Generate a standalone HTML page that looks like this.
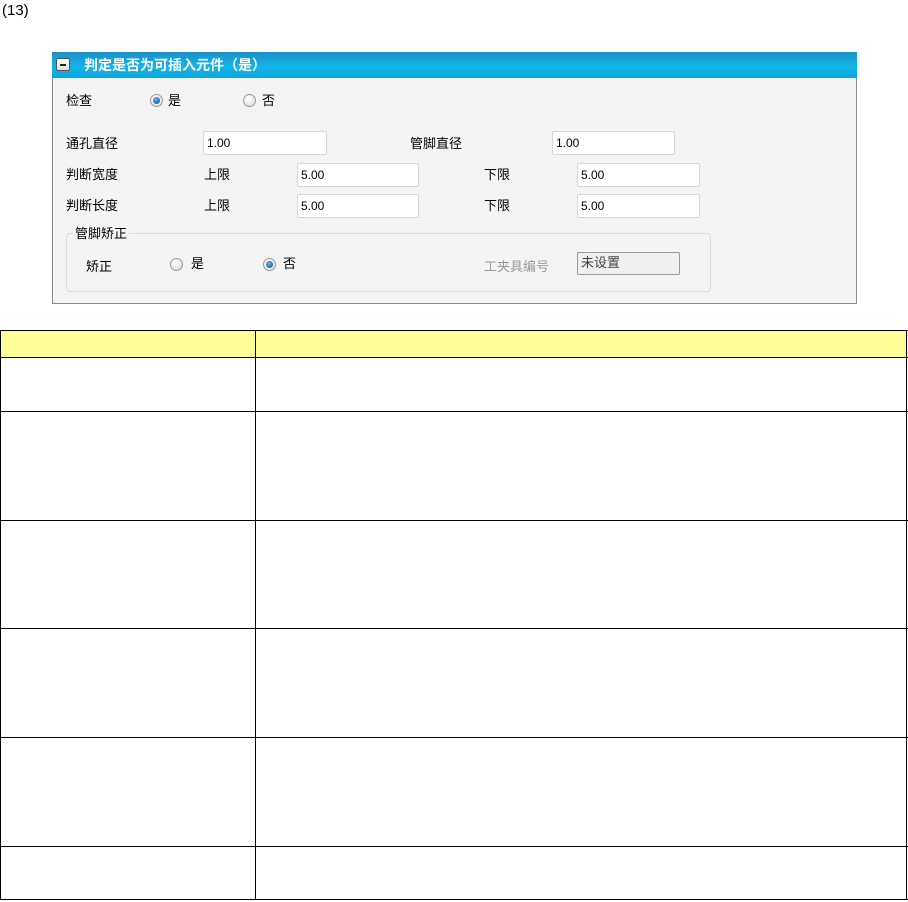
<!DOCTYPE html>
<html><head><meta charset="utf-8"><style>
body{margin:0;width:908px;height:902px;background:#fff;position:relative;font-family:"Liberation Sans","Noto Sans CJK SC",sans-serif;overflow:hidden}
.a{position:absolute}
.t{position:absolute;font-size:13px;color:#000;line-height:16px;white-space:nowrap}
.in{position:absolute;background:#fff;border:1px solid #d6d6d6;border-radius:2px;box-sizing:border-box;font-size:12px;line-height:22px;padding-left:3px;font-family:"Liberation Sans Narrow","Liberation Sans",sans-serif}
.r{position:absolute;width:11px;height:11px;border-radius:50%;border:1px solid #9a9a9a;background:radial-gradient(circle at 40% 35%,#fff,#d8d8d8)}
.r.on::after{content:"";position:absolute;left:2px;top:2px;width:7px;height:7px;border-radius:50%;background:radial-gradient(circle at 40% 35%,#6ab0e8,#0a4f8f)}
.hl{position:absolute;left:0;width:908px;height:1px;background:#000}
</style></head><body>
<div class="t" style="left:2px;top:2px;font-size:15px;line-height:18px">(13)</div>

<div class="a" style="left:52px;top:52px;width:805px;height:252px;border:1px solid #8a8a8a;box-sizing:border-box;background:#f4f4f4"></div>
<div class="a" style="left:52px;top:52px;width:805px;height:26px;background:linear-gradient(#1a90c8,#12b6e8 60%,#0ea6dc);border-bottom:1px solid #6a8a9a;box-sizing:border-box"></div>
<div class="a" style="left:56px;top:58px;width:14px;height:13px;background:linear-gradient(#fff,#ddd);border:1px solid #555;border-radius:2px;box-sizing:border-box"><div class="a" style="left:3px;top:5px;width:6px;height:2px;background:#222"></div></div>
<div class="t" style="left:84px;top:57px;color:#fff;font-weight:bold;font-size:14px">判定是否为可插入元件（是）</div>

<div class="t" style="left:66px;top:93px">检查</div>
<div class="r on" style="left:150px;top:94px"></div><div class="t" style="left:168px;top:93px">是</div>
<div class="r" style="left:243px;top:94px"></div><div class="t" style="left:262px;top:93px">否</div>

<div class="t" style="left:66px;top:136px">通孔直径</div>
<div class="in" style="left:203px;top:131px;width:124px;height:24px">1.00</div>
<div class="t" style="left:410px;top:136px">管脚直径</div>
<div class="in" style="left:552px;top:131px;width:123px;height:24px">1.00</div>

<div class="t" style="left:66px;top:167px">判断宽度</div>
<div class="t" style="left:204px;top:167px">上限</div>
<div class="in" style="left:297px;top:163px;width:122px;height:24px">5.00</div>
<div class="t" style="left:484px;top:167px">下限</div>
<div class="in" style="left:577px;top:163px;width:123px;height:24px">5.00</div>

<div class="t" style="left:66px;top:198px">判断长度</div>
<div class="t" style="left:204px;top:198px">上限</div>
<div class="in" style="left:297px;top:194px;width:122px;height:24px">5.00</div>
<div class="t" style="left:484px;top:198px">下限</div>
<div class="in" style="left:577px;top:194px;width:123px;height:24px">5.00</div>

<div class="a" style="left:66px;top:233px;width:645px;height:59px;border:1px solid #dcdcdc;border-radius:4px;box-sizing:border-box"></div>
<div class="t" style="left:73px;top:226px;background:#f4f4f4;padding:0 2px">管脚矫正</div>
<div class="t" style="left:86px;top:259px">矫正</div>
<div class="r" style="left:170px;top:258px"></div><div class="t" style="left:191px;top:256px">是</div>
<div class="r on" style="left:263px;top:258px"></div><div class="t" style="left:283px;top:256px">否</div>
<div class="t" style="left:484px;top:259px;color:#999">工夹具编号</div>
<div class="in" style="left:577px;top:252px;width:103px;height:23px;background:#efefef;border-color:#999;font-family:'Liberation Sans','Noto Sans CJK SC',sans-serif;font-size:13px;color:#444;line-height:20px">未设置</div>

<div class="a" style="left:0;top:330px;width:908px;height:28px;background:#ffff99"></div>
<div class="hl" style="top:330px"></div>
<div class="hl" style="top:357px"></div>
<div class="hl" style="top:411px"></div>
<div class="hl" style="top:520px"></div>
<div class="hl" style="top:628px"></div>
<div class="hl" style="top:737px"></div>
<div class="hl" style="top:846px"></div>
<div class="hl" style="top:899px"></div>
<div class="a" style="left:0;top:330px;width:1px;height:570px;background:#000"></div>
<div class="a" style="left:255px;top:330px;width:1px;height:570px;background:#000"></div>
<div class="a" style="left:906px;top:330px;width:1px;height:570px;background:#000"></div>
</body></html>
